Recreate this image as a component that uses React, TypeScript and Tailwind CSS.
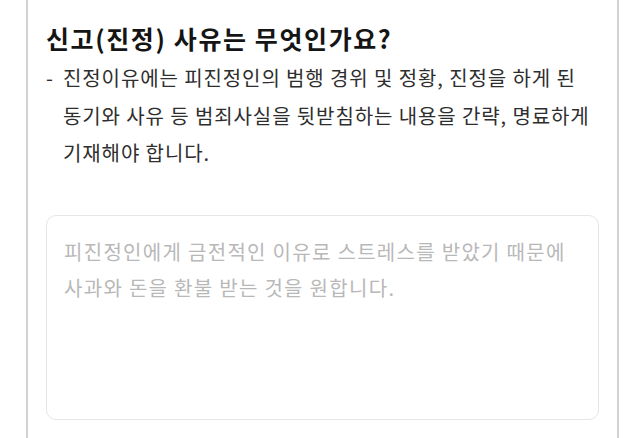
export default function App() {
  return (
    <div
      className="min-h-screen bg-white"
      style={{ fontFamily: '"Noto Sans CJK KR", "Noto Sans", sans-serif' }}
    >
      <div className="ml-[26px] w-[593px] min-h-[438px] border-x-2 border-[#d2d2d2] px-[18px] pt-[22px]">
        <h2 className="text-[25px] font-bold leading-[32px] tracking-[1.6px] text-[#151515]">
          신고(진정) 사유는 무엇인가요?
        </h2>

        <div className="mt-[5px] flex text-[20px] leading-[37.5px] tracking-[0.9px] text-[#2e2e2e]">
          <span className="w-[17px] shrink-0">-</span>
          <p className="whitespace-nowrap">
            진정이유에는 피진정인의 범행 경위 및 정황, 진정을 하게 된
            <br />
            동기와 사유 등 범죄사실을 뒷받침하는 내용을 간략, 명료하게
            <br />
            기재해야 합니다.
          </p>
        </div>

        <textarea
          placeholder={"피진정인에게 금전적인 이유로 스트레스를 받았기 때문에\n사과와 돈을 환불 받는 것을 원합니다."}
          className="mt-[43px] block h-[205px] w-full resize-none overflow-hidden rounded-[10px] border border-[#e6e6e6] px-[17px] pt-[18px] text-[20px] leading-[36px] tracking-[1.3px] text-[#333] placeholder:text-[#b8b8b8] focus:outline-none"
        />
      </div>
    </div>
  );
}
